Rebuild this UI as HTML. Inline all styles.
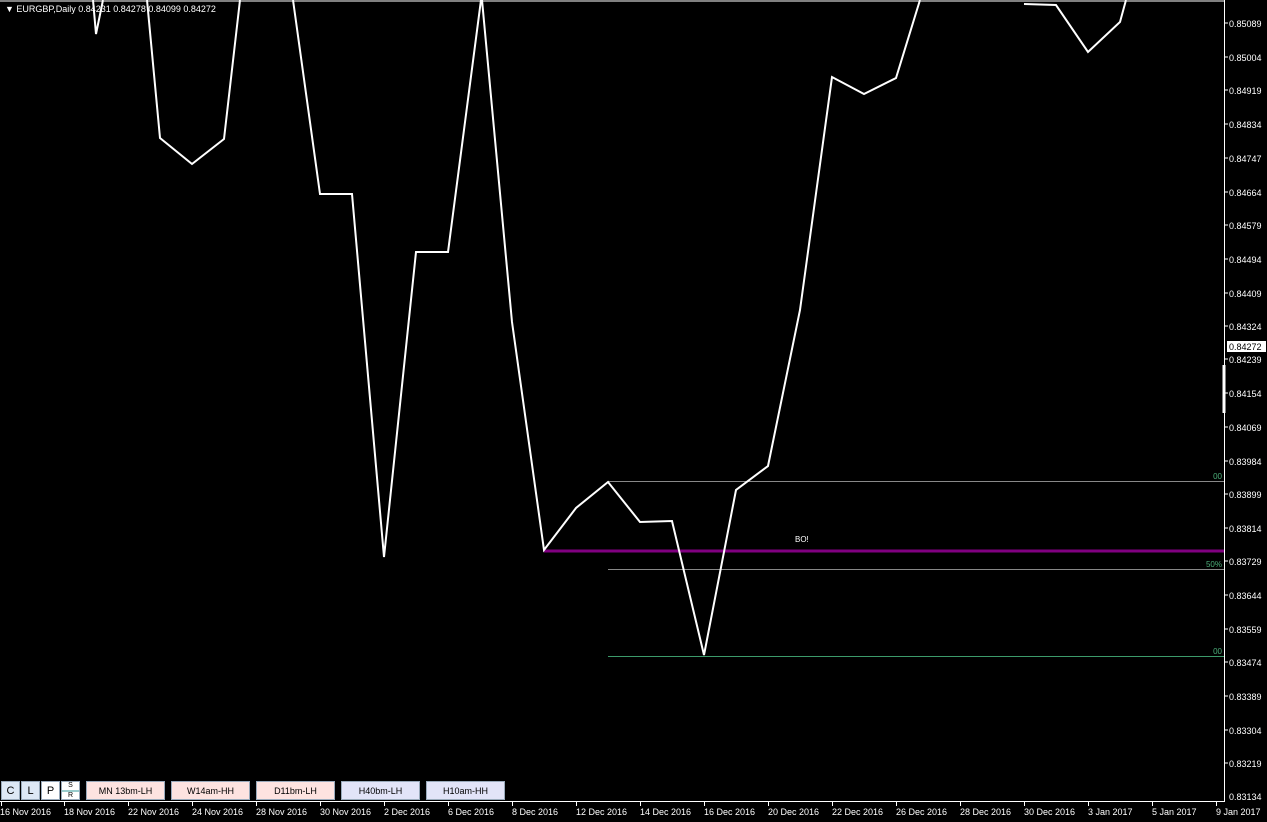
<!DOCTYPE html>
<html><head><meta charset="utf-8"><style>
html,body{margin:0;padding:0;background:#000;width:1267px;height:822px;overflow:hidden;font-family:"Liberation Sans",sans-serif}
svg{position:absolute;left:0;top:0}
.btn{position:absolute;top:781px;height:19px;font-size:9px;text-align:center;line-height:19px;color:#000;box-sizing:border-box;border:1px solid #9ab}
</style></head><body>
<svg width="1267" height="822" xmlns="http://www.w3.org/2000/svg" font-family="Liberation Sans, sans-serif">
<line x1="0" y1="1" x2="1225" y2="1" stroke="#fff" stroke-width="1"/>
<line x1="1224.5" y1="0" x2="1224.5" y2="801" stroke="#fff"/>
<line x1="0" y1="801.5" x2="1225" y2="801.5" stroke="#fff"/>
<g stroke="#3c9a6a" stroke-width="1">
<line x1="608" y1="481.5" x2="1224" y2="481.5" stroke="#888"/>
<line x1="608" y1="569.5" x2="1224" y2="569.5" stroke="#888"/>
<line x1="608" y1="656.5" x2="1224" y2="656.5"/>
</g>
<line x1="544" y1="551" x2="1224" y2="551" stroke="#800080" stroke-width="3"/>
<g fill="none" stroke="#fff" stroke-width="2" stroke-linejoin="miter">
<polyline points="93,0 96,34 103,0"/>
<polyline points="147,0 160,138 192,164 224,139 240,0"/>
<polyline points="293,0 320,194 352,194 384,557 416,252 448,252 481,0"/>
<polyline points="482,0 512,322 544,550 576,508 608,482 640,522 672,521 704,655 736,490 768,466 800,310 832,77 864,94 896,78 920,0"/>
<polyline points="1024,4 1056,5 1088,52 1120,22 1126,0"/>
</g>
<line x1="1224" y1="365" x2="1224" y2="413" stroke="#fff" stroke-width="3"/>
<text x="795" y="542" fill="#fff" font-size="8">BO!</text>
<g fill="#4caf7a" font-size="8" text-anchor="end">
<text x="1222" y="479">00</text>
<text x="1222" y="567">50%</text>
<text x="1222" y="654">00</text>
</g>
<text x="5" y="12" fill="#fff" font-size="9">▼ EURGBP,Daily  0.84231 0.84278 0.84099 0.84272</text>
<g fill="#fff" font-size="9">
<g stroke="#fff"><line x1="1225" y1="23" x2="1228" y2="23"/><line x1="1225" y1="57" x2="1228" y2="57"/><line x1="1225" y1="90" x2="1228" y2="90"/><line x1="1225" y1="124" x2="1228" y2="124"/><line x1="1225" y1="158" x2="1228" y2="158"/><line x1="1225" y1="192" x2="1228" y2="192"/><line x1="1225" y1="225" x2="1228" y2="225"/><line x1="1225" y1="259" x2="1228" y2="259"/><line x1="1225" y1="293" x2="1228" y2="293"/><line x1="1225" y1="326" x2="1228" y2="326"/><line x1="1225" y1="359" x2="1228" y2="359"/><line x1="1225" y1="393" x2="1228" y2="393"/><line x1="1225" y1="427" x2="1228" y2="427"/><line x1="1225" y1="461" x2="1228" y2="461"/><line x1="1225" y1="494" x2="1228" y2="494"/><line x1="1225" y1="528" x2="1228" y2="528"/><line x1="1225" y1="561" x2="1228" y2="561"/><line x1="1225" y1="595" x2="1228" y2="595"/><line x1="1225" y1="629" x2="1228" y2="629"/><line x1="1225" y1="662" x2="1228" y2="662"/><line x1="1225" y1="696" x2="1228" y2="696"/><line x1="1225" y1="730" x2="1228" y2="730"/><line x1="1225" y1="763" x2="1228" y2="763"/></g>
<text x="1229" y="27">0.85089</text><text x="1229" y="61">0.85004</text><text x="1229" y="94">0.84919</text><text x="1229" y="128">0.84834</text><text x="1229" y="162">0.84747</text><text x="1229" y="196">0.84664</text><text x="1229" y="229">0.84579</text><text x="1229" y="263">0.84494</text><text x="1229" y="297">0.84409</text><text x="1229" y="330">0.84324</text><text x="1229" y="363">0.84239</text><text x="1229" y="397">0.84154</text><text x="1229" y="431">0.84069</text><text x="1229" y="465">0.83984</text><text x="1229" y="498">0.83899</text><text x="1229" y="532">0.83814</text><text x="1229" y="565">0.83729</text><text x="1229" y="599">0.83644</text><text x="1229" y="633">0.83559</text><text x="1229" y="666">0.83474</text><text x="1229" y="700">0.83389</text><text x="1229" y="734">0.83304</text><text x="1229" y="767">0.83219</text><text x="1229" y="800">0.83134</text>
</g>
<rect x="1227" y="341" width="39" height="11" fill="#fff"/>
<text x="1229" y="350" fill="#000" font-size="9">0.84272</text>
<g stroke="#fff"><line x1="1.5" y1="801" x2="1.5" y2="806"/><line x1="64.5" y1="801" x2="64.5" y2="806"/><line x1="128.5" y1="801" x2="128.5" y2="806"/><line x1="192.5" y1="801" x2="192.5" y2="806"/><line x1="256.5" y1="801" x2="256.5" y2="806"/><line x1="320.5" y1="801" x2="320.5" y2="806"/><line x1="384.5" y1="801" x2="384.5" y2="806"/><line x1="448.5" y1="801" x2="448.5" y2="806"/><line x1="512.5" y1="801" x2="512.5" y2="806"/><line x1="576.5" y1="801" x2="576.5" y2="806"/><line x1="640.5" y1="801" x2="640.5" y2="806"/><line x1="704.5" y1="801" x2="704.5" y2="806"/><line x1="768.5" y1="801" x2="768.5" y2="806"/><line x1="832.5" y1="801" x2="832.5" y2="806"/><line x1="896.5" y1="801" x2="896.5" y2="806"/><line x1="960.5" y1="801" x2="960.5" y2="806"/><line x1="1024.5" y1="801" x2="1024.5" y2="806"/><line x1="1088.5" y1="801" x2="1088.5" y2="806"/><line x1="1152.5" y1="801" x2="1152.5" y2="806"/><line x1="1216.5" y1="801" x2="1216.5" y2="806"/></g>
<g fill="#fff" font-size="9">
<text x="0" y="815">16 Nov 2016</text><text x="64" y="815">18 Nov 2016</text><text x="128" y="815">22 Nov 2016</text><text x="192" y="815">24 Nov 2016</text><text x="256" y="815">28 Nov 2016</text><text x="320" y="815">30 Nov 2016</text><text x="384" y="815">2 Dec 2016</text><text x="448" y="815">6 Dec 2016</text><text x="512" y="815">8 Dec 2016</text><text x="576" y="815">12 Dec 2016</text><text x="640" y="815">14 Dec 2016</text><text x="704" y="815">16 Dec 2016</text><text x="768" y="815">20 Dec 2016</text><text x="832" y="815">22 Dec 2016</text><text x="896" y="815">26 Dec 2016</text><text x="960" y="815">28 Dec 2016</text><text x="1024" y="815">30 Dec 2016</text><text x="1088" y="815">3 Jan 2017</text><text x="1152" y="815">5 Jan 2017</text><text x="1216" y="815">9 Jan 2017</text>
</g>
</svg>
<div class="btn" style="left:1px;width:19px;background:#dde8f5;font-size:11px">C</div>
<div class="btn" style="left:21px;width:19px;background:#dde8f5;font-size:11px">L</div>
<div class="btn" style="left:41px;width:19px;background:#fff;font-size:11px">P</div>
<div class="btn" style="left:61px;width:19px;background:#fff;font-size:7px;line-height:8px">S<div style="height:2px;background:#9cc"></div>R</div>
<div class="btn" style="left:86px;width:79px;background:#fde3e0">MN 13bm-LH</div>
<div class="btn" style="left:171px;width:79px;background:#fde3e0">W14am-HH</div>
<div class="btn" style="left:256px;width:79px;background:#fde3e0">D11bm-LH</div>
<div class="btn" style="left:341px;width:79px;background:#e2e4f8">H40bm-LH</div>
<div class="btn" style="left:426px;width:79px;background:#e2e4f8">H10am-HH</div>
</body></html>
